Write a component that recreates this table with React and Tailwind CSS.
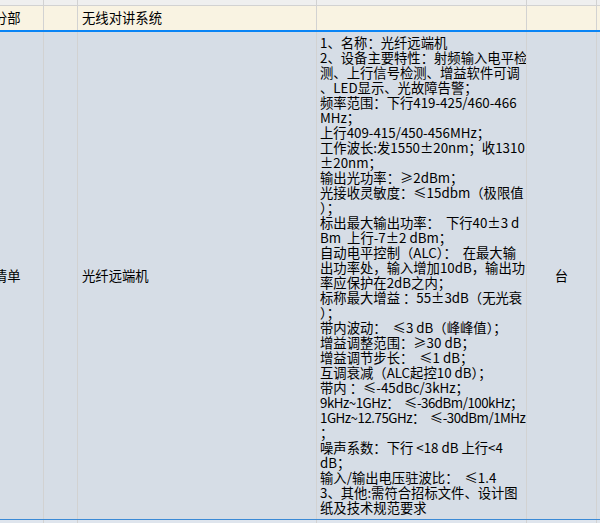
import React from 'react';

const lines = [
  '1、名称：光纤远端机',
  '2、设备主要特性：射频输入电平检',
  '测、上行信号检测、增益软件可调',
  '、LED显示、光故障告警；',
  '频率范围：下行419-425/460-466',
  'MHz；',
  '上行409-415/450-456MHz；',
  '工作波长:发1550±20nm；收1310',
  '±20nm；',
  '输出光功率：≥2dBm；',
  '光接收灵敏度：≤15dbm（极限值',
  '）；',
  '标出最大输出功率：  下行40±3 d',
  'Bm  上行-7±2 dBm；',
  '自动电平控制（ALC）：  在最大输',
  '出功率处，输入增加10dB，输出功',
  '率应保护在2dB之内；',
  '标称最大增益 ：55±3dB（无光衰',
  '）；',
  '带内波动：  ≤3 dB（峰峰值）；',
  '增益调整范围：≥30 dB；',
  '增益调节步长：  ≤1 dB；',
  '互调衰减（ALC起控10 dB）；',
  '带内 ：≤-45dBc/3kHz；',
  '9kHz~1GHz：  ≤-36dBm/100kHz；',
  '1GHz~12.75GHz：  ≤-30dBm/1MHz',
  '；',
  '噪声系数：下行 <18 dB 上行<4',
  'dB；',
  '输入/输出电压驻波比：  ≤1.4',
  '3、其他:需符合招标文件、设计图',
  '纸及技术规范要求',
];

// lines whose latin runs are wider than the sheet's half-width glyphs
const tight = [24, 25];

const Cell = ({ className = '', children }) => (
  <div className={`shrink-0 overflow-hidden border-r border-[#d2d2d2] ${className}`}>{children}</div>
);

export default function App() {
  return (
    <div
      className="w-[600px] h-[523px] overflow-hidden bg-white text-black text-[13.33px]"
      style={{ fontFamily: '"Noto Sans CJK SC", "Liberation Sans", sans-serif' }}
    >
      {/* header strip */}
      <div className="flex h-[6px] bg-[#efefef] border-b border-[#d2d2d2]">
        <Cell className="w-[44px]" />
        <Cell className="w-[34px]" />
        <Cell className="w-[239px]" />
        <Cell className="w-[210px]" />
        <Cell className="w-[70px]" />
        <div className="flex-1" />
      </div>

      {/* section row */}
      <div className="flex h-[24px] bg-[#f9f3e2] leading-[24px]">
        <Cell className="w-[44px]">
          <span className="block whitespace-nowrap -ml-[6px]">分部</span>
        </Cell>
        <Cell className="w-[34px]" />
        <Cell className="w-[239px] pl-[4px] whitespace-nowrap">无线对讲系统</Cell>
        <Cell className="w-[210px]" />
        <Cell className="w-[70px]" />
        <div className="flex-1" />
      </div>
      <div className="h-[2px] bg-[#0a84f5]" />

      {/* item row */}
      <div className="flex h-[487px] bg-[#d6dde6]">
        <Cell className="w-[44px] flex items-center border-[#c6ccd4]">
          <span className="block whitespace-nowrap -ml-[6px]">清单</span>
        </Cell>
        <Cell className="w-[34px] border-[#c6ccd4]" />
        <Cell className="w-[239px] flex items-center pl-[4px] whitespace-nowrap border-[#c6ccd4]">
          光纤远端机
        </Cell>
        <Cell className="w-[210px] pl-[3px] pt-[3px] leading-[15px] border-[#c6ccd4]">
          {lines.map((l, i) => (
            <div key={i} className={`whitespace-pre ${tight.includes(i) ? 'tracking-[-0.5px]' : ''}`}>
              {l}
            </div>
          ))}
        </Cell>
        <Cell className="w-[70px] flex items-center justify-center border-[#c6ccd4]">台</Cell>
        <div className="flex-1" />
      </div>
      <div className="h-[1px] bg-[#3b8ad6]" />

      {/* next row */}
      <div className="flex h-[10px] bg-[#dfe5ed]">
        <Cell className="w-[44px] border-[#c6ccd4]" />
        <Cell className="w-[34px] border-[#c6ccd4]" />
        <Cell className="w-[239px] border-[#c6ccd4]" />
        <Cell className="w-[210px] border-[#c6ccd4]" />
        <Cell className="w-[70px] border-[#c6ccd4]" />
        <div className="flex-1" />
      </div>
    </div>
  );
}
